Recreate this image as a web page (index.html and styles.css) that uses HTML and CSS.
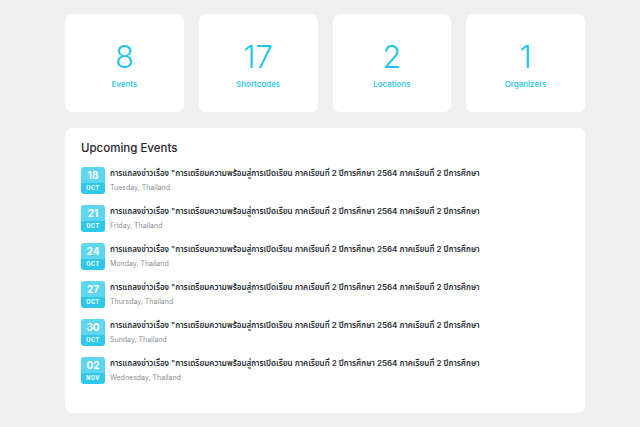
FILE: index.html
```html
<!DOCTYPE html>
<html>
<head>
<meta charset="utf-8">
<link rel="stylesheet" href="styles.css">
</head>
<body>
<div class="wrap">
  <div class="stats">
    <div class="card"><div class="num">8</div><div class="label">Events</div></div>
    <div class="card"><div class="num">17</div><div class="label">Shortcodes</div></div>
    <div class="card"><div class="num">2</div><div class="label">Locations</div></div>
    <div class="card"><div class="num">1</div><div class="label">Organizers</div></div>
  </div>
  <div class="panel">
    <h2 class="title">Upcoming Events</h2>
    <ul class="events">
      <li class="event"><div class="date"><span class="day">18</span><span class="mon">OCT</span></div><div class="info"><div class="name">การแถลงข่าวเรื่อง "การเตรียมความพร้อมสู่การเปิดเรียน ภาคเรียนที่ 2 ปีการศึกษา 2564 ภาคเรียนที่ 2 ปีการศึกษา</div><div class="meta">Tuesday, Thailand</div></div></li>
      <li class="event"><div class="date"><span class="day">21</span><span class="mon">OCT</span></div><div class="info"><div class="name">การแถลงข่าวเรื่อง "การเตรียมความพร้อมสู่การเปิดเรียน ภาคเรียนที่ 2 ปีการศึกษา 2564 ภาคเรียนที่ 2 ปีการศึกษา</div><div class="meta">Friday, Thailand</div></div></li>
      <li class="event"><div class="date"><span class="day">24</span><span class="mon">OCT</span></div><div class="info"><div class="name">การแถลงข่าวเรื่อง "การเตรียมความพร้อมสู่การเปิดเรียน ภาคเรียนที่ 2 ปีการศึกษา 2564 ภาคเรียนที่ 2 ปีการศึกษา</div><div class="meta">Monday, Thailand</div></div></li>
      <li class="event"><div class="date"><span class="day">27</span><span class="mon">OCT</span></div><div class="info"><div class="name">การแถลงข่าวเรื่อง "การเตรียมความพร้อมสู่การเปิดเรียน ภาคเรียนที่ 2 ปีการศึกษา 2564 ภาคเรียนที่ 2 ปีการศึกษา</div><div class="meta">Thursday, Thailand</div></div></li>
      <li class="event"><div class="date"><span class="day">30</span><span class="mon">OCT</span></div><div class="info"><div class="name">การแถลงข่าวเรื่อง "การเตรียมความพร้อมสู่การเปิดเรียน ภาคเรียนที่ 2 ปีการศึกษา 2564 ภาคเรียนที่ 2 ปีการศึกษา</div><div class="meta">Sunday, Thailand</div></div></li>
      <li class="event"><div class="date"><span class="day">02</span><span class="mon">NOV</span></div><div class="info"><div class="name">การแถลงข่าวเรื่อง "การเตรียมความพร้อมสู่การเปิดเรียน ภาคเรียนที่ 2 ปีการศึกษา 2564 ภาคเรียนที่ 2 ปีการศึกษา</div><div class="meta">Wednesday, Thailand</div></div></li>
    </ul>
  </div>
</div>
</body>
</html>
```
FILE: styles.css
```css
* { box-sizing: border-box; }
html, body { margin: 0; padding: 0; }
body {
  background: #efefef;
  font-family: Inter, "Noto Sans", "Noto Sans Thai", sans-serif;
  color: #2a2f36;
}
.wrap {
  width: 520px;
  margin-left: 65px;
  padding-top: 14px;
}
.stats {
  display: grid;
  grid-template-columns: repeat(4, 1fr);
  gap: 15px;
}
.card {
  background: #fff;
  border-radius: 7px;
  height: 98px;
  display: flex;
  flex-direction: column;
  align-items: center;
  padding-top: 26px;
}
.num {
  font-size: 31px;
  font-weight: 300;
  line-height: 34px;
  color: #1cc6e8;
}
.label {
  margin-top: 5px;
  font-size: 8px;
  font-weight: 500;
  color: #1cc6e8;
}
.panel {
  margin-top: 16px;
  background: #fff;
  border-radius: 7px;
  height: 285px;
  padding: 13px 16px;
}
.title {
  margin: 0;
  font-size: 11.5px;
  font-weight: 500;
  color: #1f242b;
  line-height: 14px;
}
.events {
  list-style: none;
  margin: 12px 0 0;
  padding: 0;
  display: flex;
  flex-direction: column;
  gap: 11px;
}
.event {
  display: flex;
  gap: 5px;
  height: 27px;
}
.date {
  width: 24px;
  height: 27px;
  border-radius: 3px;
  overflow: hidden;
  display: flex;
  flex-direction: column;
  flex-shrink: 0;
}
.day {
  height: 16px;
  background: #5dd6ef;
  color: #fff;
  font-size: 10px;
  font-weight: 700;
  text-align: center;
  line-height: 16px;
}
.mon {
  height: 11px;
  background: #2ec9ea;
  color: #fff;
  font-size: 5.5px;
  font-weight: 700;
  text-align: center;
  line-height: 11px;
  letter-spacing: 0.5px;
}
.info { padding-top: 1px; }
.name {
  font-size: 8px;
  font-weight: 600;
  color: #2a2f36;
  line-height: 11px;
  white-space: nowrap;
}
.meta {
  margin-top: 4px;
  font-size: 7px;
  color: #8a8f96;
  line-height: 9px;
}
```
